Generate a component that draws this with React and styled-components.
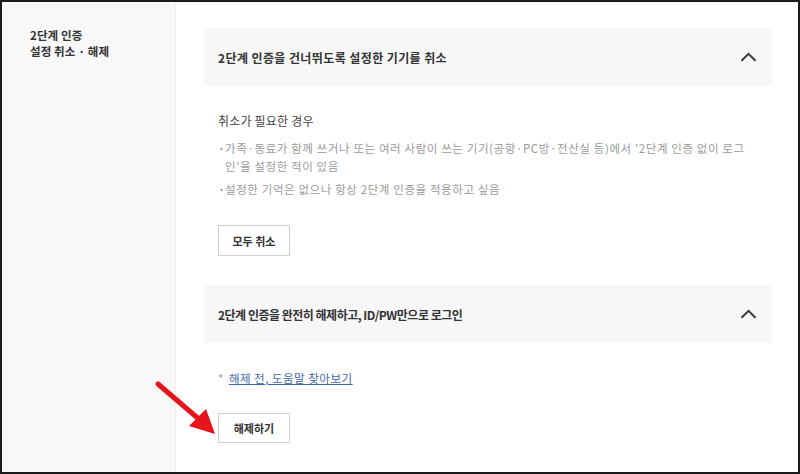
import React from 'react'
import styled, { createGlobalStyle } from 'styled-components'

const GlobalStyle = createGlobalStyle`
  html, body {
    margin: 0;
    padding: 0;
    background: #fff;
  }
  * { box-sizing: border-box; }
`

const Frame = styled.div`
  position: relative;
  width: 800px;
  height: 474px;
  display: flex;
  border: 2px solid #1b1b1b;
  overflow: hidden;
  font-family: "Noto Sans CJK KR", "Noto Sans", sans-serif;
  color: #333;
`

const Sidebar = styled.aside`
  width: 174px;
  flex-shrink: 0;
  background: #f8f8f8;
  border-right: 1px solid #ececec;
  padding: 25px 0 0 28px;
`

const SideTitle = styled.h2`
  margin: 0;
  font-size: 11.5px;
  font-weight: 700;
  line-height: 16px;
  color: #333;
  letter-spacing: 0.1px;
`

const Main = styled.main`
  flex: 1;
  padding: 25px 26px 0 28px;
  border-right: 1px solid #eee;
  border-top: 1px solid #f2f2f2;
`

const Section = styled.section`
  display: flex;
  flex-direction: column;
`

const Header = styled.div`
  height: 58px;
  display: flex;
  align-items: center;
  justify-content: space-between;
  padding: 0 15px 0 14px;
  background: #f7f7f7;
`

const HeaderTitle = styled.h3`
  margin: 0;
  font-size: 12px;
  font-weight: 700;
  color: #333;
  letter-spacing: ${p => p.$ls}px;
`

const Body = styled.div`
  display: flex;
  flex-direction: column;
  align-items: flex-start;
  padding: 25px 14px ${p => p.$bottom}px;
`

const Lead = styled.p`
  margin: 0;
  font-size: 12px;
  line-height: 20px;
  color: #444;
  letter-spacing: 0.2px;
`

const List = styled.ul`
  list-style: none;
  margin: 8px 0 0;
  padding: 0;
  display: flex;
  flex-direction: column;
  gap: 5px;
`

const Item = styled.li`
  position: relative;
  padding-left: 7px;
  font-size: 11.5px;
  line-height: 18px;
  color: #9a9a9a;
  letter-spacing: 0.6px;
  width: 540px;

  &::before {
    content: '·';
    position: absolute;
    left: 0;
    top: 0;
    font-weight: 700;
  }
`

const Button = styled.button`
  margin-top: ${p => p.$gap}px;
  width: 72px;
  height: ${p => p.$h}px;
  background: #fff;
  border: 1px solid #cfcfcf;
  font-family: inherit;
  font-size: 11px;
  font-weight: 700;
  color: #333;
  cursor: pointer;
`

const HelpLine = styled.p`
  margin: 0;
  font-size: 11.5px;
  line-height: 20px;
  color: #999;
  letter-spacing: 0.5px;
`

const HelpLink = styled.a`
  color: #3d67ad;
  text-decoration: underline;
  margin-left: 5px;
`

const Arrow = styled.svg`
  position: absolute;
  left: 150px;
  top: 375px;
`

const Chevron = () => (
  <svg width="17" height="10" viewBox="0 0 17 10">
    <path d="M1.5 8.8 L8.5 1.8 L15.5 8.8" fill="none" stroke="#3a3a3a" strokeWidth="2" />
  </svg>
)

const App = () => {
  return (
    <>
      <GlobalStyle />
      <Frame>
        <Sidebar>
          <SideTitle>2단계 인증<br />설정 취소 · 해제</SideTitle>
        </Sidebar>
        <Main>
          <Section>
            <Header>
              <HeaderTitle $ls={0.4}>2단계 인증을 건너뛰도록 설정한 기기를 취소</HeaderTitle>
              <Chevron />
            </Header>
            <Body $bottom={29}>
              <Lead>취소가 필요한 경우</Lead>
              <List>
                <Item>가족·동료가 함께 쓰거나 또는 여러 사람이 쓰는 기기(공항·PC방·전산실 등)에서 '2단계 인증 없이 로그인'을 설정한 적이 있음</Item>
                <Item>설정한 기억은 없으나 항상 2단계 인증을 적용하고 싶음</Item>
              </List>
              <Button $gap={27} $h={31}>모두 취소</Button>
            </Body>
          </Section>
          <Section>
            <Header>
              <HeaderTitle $ls={-0.5}>2단계 인증을 완전히 해제하고, ID/PW만으로 로그인</HeaderTitle>
              <Chevron />
            </Header>
            <Body $bottom={30}>
              <HelpLine>*<HelpLink href="#">해제 전, 도움말 찾아보기</HelpLink></HelpLine>
              <Button $gap={25} $h={30}>해제하기</Button>
            </Body>
          </Section>
        </Main>
        <Arrow width="70" height="62" viewBox="0 0 70 62">
          <line x1="6" y1="7" x2="48" y2="43" stroke="#e8141b" strokeWidth="5" strokeLinecap="round" />
          <polygon points="63,57 37,49 54,32" fill="#e8141b" />
        </Arrow>
      </Frame>
    </>
  )
}

export default App
